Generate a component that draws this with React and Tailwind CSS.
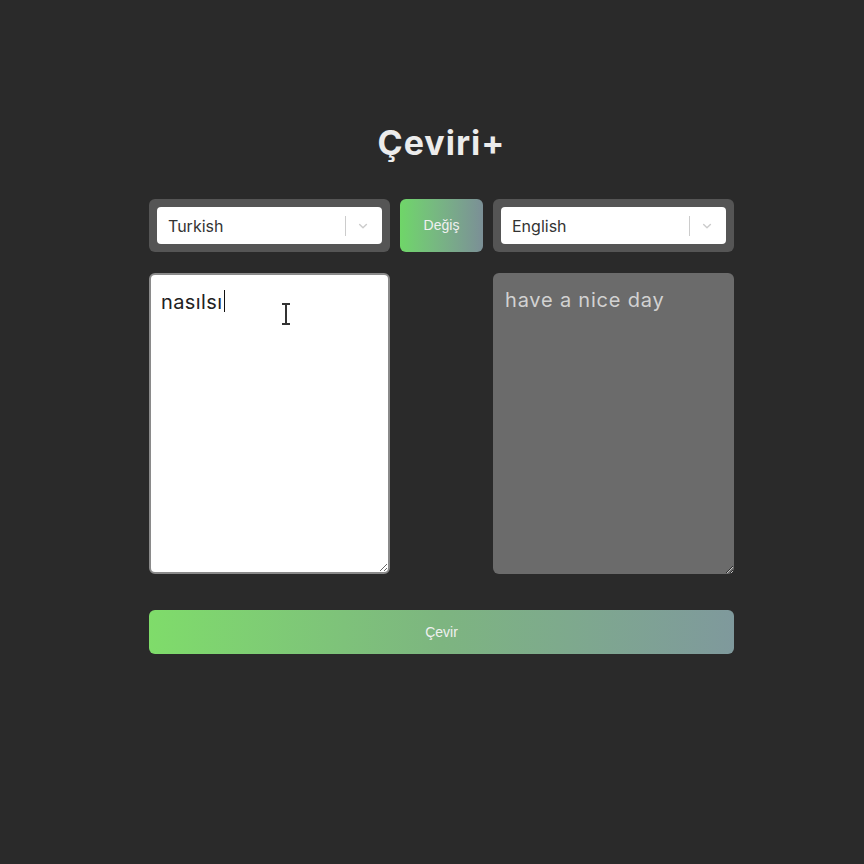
import React, { useState } from "react";

const Select = ({ value }) => {
  return (
    <div className="flex-1 rounded-md bg-[#555555] p-2">
      <div className="flex h-[37px] items-center rounded bg-white pl-[11px] pr-2">
        <span className="text-[16px] text-[#333333]">{value}</span>
        <span className="ms-auto h-5 w-px bg-[#cccccc]"></span>
        <svg className="ml-[10px] mr-[4px] h-[14px] w-[14px]" viewBox="0 0 20 20" fill="#cccccc">
          <path d="M4.5 7.2a1 1 0 0 1 1.4 0L10 11.1l4.1-3.9a1 1 0 1 1 1.4 1.4l-4.8 4.6a1 1 0 0 1-1.4 0L4.5 8.6a1 1 0 0 1 0-1.4z" />
        </svg>
      </div>
    </div>
  );
};

const App = () => {
  const [source, setSource] = useState("nasılsı");
  const [target] = useState("have a nice day");

  return (
    <div className="min-h-[864px] w-full bg-[#2a2a2a] font-['Inter','Liberation_Sans',sans-serif]">
      <div className="ml-[149px] flex w-[585px] flex-col pt-[119px]">
        <h1 className="text-center text-[34px] font-bold leading-[48px] tracking-[0.03em] text-[#ececec]">Çeviri+</h1>

        <div className="mt-[32px] flex h-[53px] gap-[10px]">
          <Select value="Turkish" />
          <button className="w-[83px] rounded-md bg-gradient-to-r from-[#6fd668] to-[#7b8f96] font-['Liberation_Sans',sans-serif] text-[14px] text-[#f0f0f0]">
            Değiş
          </button>
          <Select value="English" />
        </div>

        <div className="mt-[21px] flex justify-between">
          <div className="relative">
            <textarea
              value={source}
              onChange={(e) => setSource(e.target.value)}
              className="block h-[301px] w-[241px] rounded-md border-2 border-[#8a8a8a] bg-white px-[10px] py-[14px] text-[20px] leading-[26px] tracking-[0.02em] text-[#222222] outline-none"
            />
            <span className="absolute left-[75px] top-[17px] h-[22px] w-px bg-[#111111]"></span>
            <svg className="absolute left-[130px] top-[29px] h-[24px] w-[14px]" viewBox="0 0 14 24" fill="none" stroke="#333" strokeWidth="2">
              <path d="M3 2h8M7 2v20M3 22h8" />
            </svg>
          </div>
          <textarea
            value={target}
            readOnly
            className="block h-[301px] w-[241px] rounded-md bg-[#6b6b6b] px-[12px] py-[14px] text-[20px] leading-[26px] tracking-[0.04em] text-[#d2d2d2] outline-none"
          />
        </div>

        <button className="mt-[36px] h-[44px] w-full rounded-md bg-gradient-to-r from-[#7fdc6a] via-[#7db580] to-[#7f999c] font-['Liberation_Sans',sans-serif] text-[14px] text-[#f0f0f0]">
          Çevir
        </button>
      </div>
    </div>
  );
};

export default App;
